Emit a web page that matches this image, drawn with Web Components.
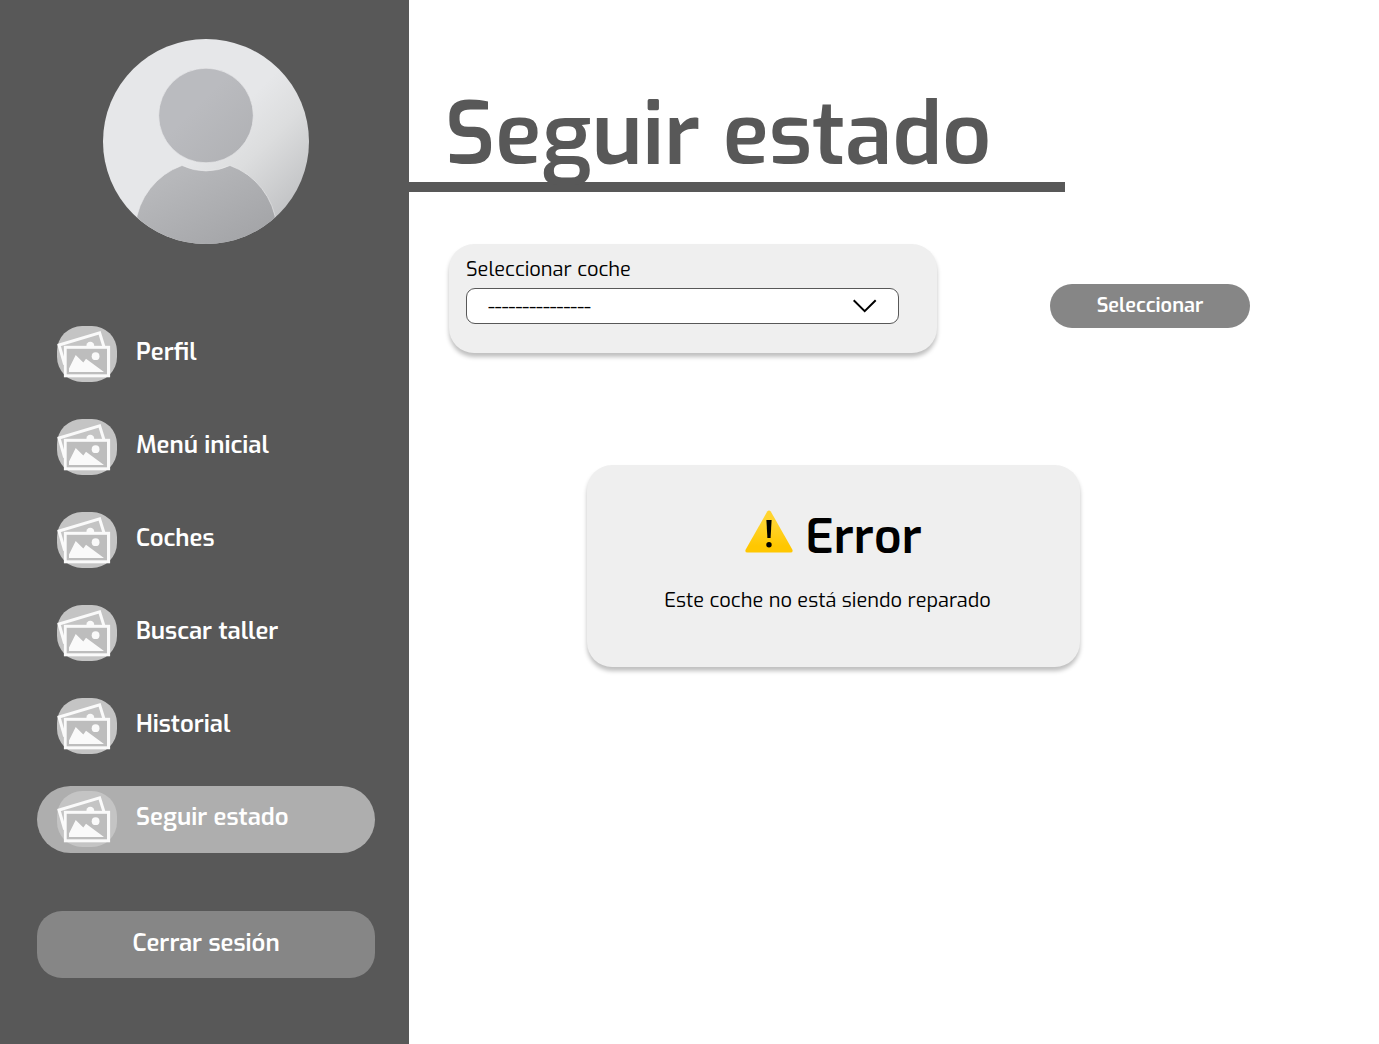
<!DOCTYPE html>
<html lang="es">
<head>
<meta charset="utf-8">
<title>Seguir estado</title>
<meta name="viewport" content="width=device-width, initial-scale=1">
<style>
  body { margin: 0; background: #fff; color: #000; font-family: Exo, "Exo 2", Roboto, "Noto Sans", sans-serif; }
</style>
</head>
<body>
<app-shell>
  <side-bar slot="side">
    <user-avatar slot="avatar"></user-avatar>
    <nav-item>Perfil</nav-item>
    <nav-item>Menú inicial</nav-item>
    <nav-item>Coches</nav-item>
    <nav-item>Buscar taller</nav-item>
    <nav-item>Historial</nav-item>
    <nav-item active>Seguir estado</nav-item>
    <pill-button slot="footer" large>Cerrar sesión</pill-button>
  </side-bar>
  <page-title>Seguir estado</page-title>
  <car-picker></car-picker>
  <error-card heading="Error">Este coche no está siendo reparado</error-card>
</app-shell>

<script>
const define = (name, html, setup) => customElements.define(name, class extends HTMLElement {
  constructor() {
    super();
    const template = document.createElement('template');
    template.innerHTML = '<style>*{box-sizing:border-box}:host{box-sizing:border-box;display:block}svg{display:block}</style>' + html;
    this.attachShadow({ mode: 'open' }).append(template.content.cloneNode(true));
  }
  connectedCallback() { if (setup) setup(this); }
});

define('app-shell', `
  <style>
    :host { display: flex; min-height: 100vh; }
    main { flex: 1; min-width: 0; padding: 88px 0 40px; }
  </style>
  <slot name="side"></slot>
  <main><slot></slot></main>
`);

define('side-bar', `
  <style>
    :host { flex: none; width: 409px; padding: 39px 34px 39px 37px; background: #585858; }
    nav { display: flex; flex-direction: column; gap: 26px; margin: 77px 0 58px; }
  </style>
  <slot name="avatar"></slot>
  <nav><slot></slot></nav>
  <slot name="footer"></slot>
`);

define('user-avatar', `
  <style>
    :host { width: 206px; margin: 0 auto; }
  </style>
  <svg width="206" height="205" viewBox="0 0 206 205" preserveAspectRatio="none" role="img" aria-label="Usuario">
    <defs>
      <linearGradient id="back" x1="0" y1="0" x2="1" y2="1">
        <stop offset="0.5" stop-color="#e6e7e9"/><stop offset="0.65" stop-color="#dcddde"/><stop offset="0.85" stop-color="#c4c5c7"/>
      </linearGradient>
      <linearGradient id="head" x1="0" y1="0" x2="1" y2="1">
        <stop offset="0.4" stop-color="#babbbf"/><stop offset="1" stop-color="#afb0b3"/>
      </linearGradient>
      <linearGradient id="torso" x1="0" y1="0" x2="1" y2="1">
        <stop offset="0.2" stop-color="#b7b8bb"/><stop offset="0.9" stop-color="#a3a4a7"/>
      </linearGradient>
      <clipPath id="disc"><ellipse cx="103" cy="102.5" rx="103" ry="102.5"/></clipPath>
    </defs>
    <g clip-path="url(#disc)">
      <rect width="206" height="205" fill="url(#back)"/>
      <circle cx="103" cy="76.500" r="47.300" fill="url(#head)" stroke="#ecedee" stroke-width="0.600"/>
      <path d="M32.500 186A71 71 0 0 1 79 126.500A55.500 55.500 0 0 0 127 126.500A71 71 0 0 1 173.500 186V206H32.500Z" fill="url(#torso)" stroke="#ecedee" stroke-width="0.600"/>
    </g>
  </svg>
`);

define('nav-item', `
  <style>
    a { display: flex; align-items: center; gap: 19px; height: 67px; padding: 0 20px 2px; border-radius: 34px; color: #fff; font-size: 24px; font-weight: 600; line-height: 28px; text-decoration: none; }
    :host([active]) a { background: #aeaeae; }
    span { padding-bottom: 3px; }
    svg { flex: none; }
  </style>
  <a href="#">
    <svg width="60" height="56" viewBox="0 0 60 56" aria-hidden="true">
      <rect width="60" height="56" rx="25" fill="#c4c4c4"/>
      <path d="M7.700 38.500L2 19L42.600 6.900L47 21" fill="none" stroke="#fafafa" stroke-width="3"/>
      <path d="M29.500 20.500a3.900 3.900 0 1 1 7.600 0z" fill="#fafafa"/>
      <rect x="6.900" y="19.800" width="46.200" height="31.500" fill="#fafafa"/>
      <rect x="9.700" y="22.800" width="40.300" height="25.500" fill="#bdbdbd"/>
      <path d="M12 46V42.500L18.700 29L26.300 36.500L29 32.700L47 46Z" fill="#fafafa"/>
      <circle cx="38.600" cy="30.200" r="3.900" fill="#fafafa"/>
    </svg>
    <span><slot></slot></span>
  </a>
`, host => {
  if (host.hasAttribute('active')) host.shadowRoot.querySelector('a').setAttribute('aria-current', 'page');
});

define('pill-button', `
  <style>
    button { display: block; width: 100%; height: 44px; padding: 0 0 1px; border: 0; border-radius: 22px; background: #868686; color: #fff; font-family: inherit; font-size: 20px; font-weight: 600; line-height: 28px; cursor: pointer; }
    :host([large]) button { height: 67px; padding-bottom: 4px; border-radius: 25px; font-size: 24px; }
  </style>
  <button type="button"><slot></slot></button>
`);

define('page-title', `
  <style>
    :host { width: 656px; max-width: 100%; border-bottom: 10px solid #585858; }
    h1 { height: 94px; margin: 0; padding-left: 36px; color: #585858; font-size: 86px; font-weight: 600; line-height: 94px; white-space: nowrap; }
  </style>
  <h1><slot></slot></h1>
`);

define('car-picker', `
  <style>
    :host { display: flex; align-items: flex-end; justify-content: space-between; gap: 24px; margin: 52px 129px 0 40px; }
    .card { flex: 0 1 488px; padding: 12px 38px 29px 17px; border-radius: 25px; background: #efefef; box-shadow: 0 4px 4px rgba(0,0,0,.25); }
    label { display: block; margin-bottom: 4px; font-size: 20px; line-height: 28px; }
    .field { display: grid; align-items: center; }
    .field > * { grid-area: 1 / 1; }
    select { appearance: none; width: 100%; height: 36px; padding: 2px 60px 0 21px; border: 1px solid #585858; border-radius: 9px; background: #fff; color: #000; font-family: inherit; font-size: 20px; }
    svg { justify-self: end; margin-right: 22px; pointer-events: none; }
    pill-button { flex: none; width: 200px; margin-bottom: 25px; }
  </style>
  <div class="card">
    <label for="car">Seleccionar coche</label>
    <div class="field">
      <select id="car"><option>---------------</option></select>
      <svg width="24" height="14" viewBox="0 0 24 14" fill="none" stroke="#000" stroke-width="2" aria-hidden="true"><path d="M0.700 1.200L11.700 12.200L22.700 1.200"/></svg>
    </div>
  </div>
  <pill-button>Seleccionar</pill-button>
`);

define('error-card', `
  <style>
    :host { max-width: 493px; margin: 112px 40px 0 178px; padding: 42px 40px 52px; border-radius: 25px; background: #efefef; box-shadow: 0 4px 4px rgba(0,0,0,.25); text-align: center; }
    h2 { display: flex; justify-content: center; gap: 12px; margin: 0 0 20px; font-size: 48px; font-weight: 600; line-height: 60px; }
    svg { margin-top: 3px; }
    p { margin: 0; padding-right: 12px; font-size: 20px; font-weight: 400; line-height: 28px; }
  </style>
  <h2>
    <svg width="48" height="43" viewBox="0 0 48 43" aria-hidden="true">
      <defs><linearGradient id="sun" x1="0" y1="0" x2="0" y2="1"><stop offset="0.3" stop-color="#ffd42f"/><stop offset="0.85" stop-color="#ffc700"/></linearGradient></defs>
      <path d="M22.200 1.500Q24 -0.700 25.800 1.500L47.300 39.500Q48.500 42.500 45.500 42.500H2.500Q-0.500 42.500 0.700 39.500Z" fill="url(#sun)"/>
      <path d="M21.400 10h5.200l-1 18h-3.200z"/><circle cx="24" cy="34.700" r="2.700"/>
    </svg>
    <span></span>
  </h2>
  <p><slot></slot></p>
`, host => { host.shadowRoot.querySelector('span').textContent = host.getAttribute('heading'); });
</script>
</body>
</html>
